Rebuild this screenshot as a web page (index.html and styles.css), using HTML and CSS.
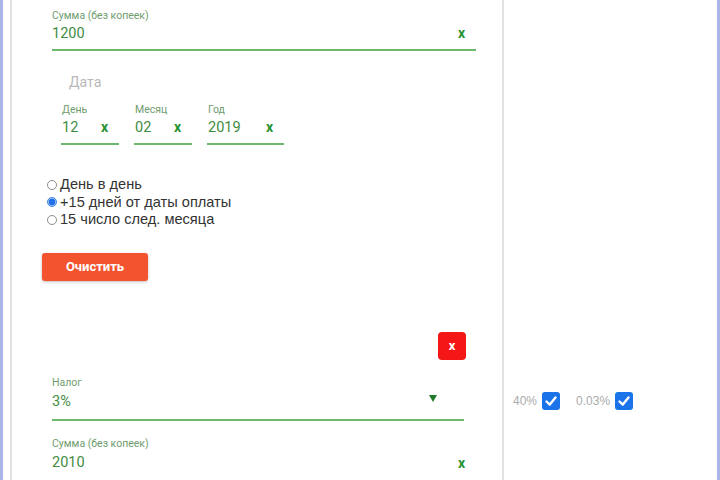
FILE: index.html
```html
<!DOCTYPE html>
<html lang="ru">
<head>
<meta charset="utf-8">
<link rel="stylesheet" href="styles.css">
</head>
<body>
<div class="frame">
  <div class="gutter"></div>
  <main class="main">
    <section class="calc">
      <div class="field field-wide">
        <div class="label">Сумма (без копеек)</div>
        <div class="value-row"><span class="value">1200</span><span class="clear">x</span></div>
      </div>

      <div class="date-title">Дата</div>
      <div class="date-row">
        <div class="field field-day">
          <div class="label">День</div>
          <div class="value-row"><span class="value">12</span><span class="clear">x</span></div>
        </div>
        <div class="field field-day">
          <div class="label">Месяц</div>
          <div class="value-row"><span class="value">02</span><span class="clear">x</span></div>
        </div>
        <div class="field field-year">
          <div class="label">Год</div>
          <div class="value-row"><span class="value">2019</span><span class="clear">x</span></div>
        </div>
      </div>

      <div class="radios">
        <label class="radio"><span class="dot"></span>День в день</label>
        <label class="radio"><span class="dot checked"></span>+15 дней от даты оплаты</label>
        <label class="radio"><span class="dot"></span>15 число след. месяца</label>
      </div>

      <button class="btn-clear">Очистить</button>
    </section>

    <section class="tax">
      <div class="remove-row"><button class="btn-remove">x</button></div>
      <div class="field field-select">
        <div class="label">Налог</div>
        <div class="value-row"><span class="value">3%</span><span class="caret"></span></div>
      </div>
      <div class="field field-wide field-second">
        <div class="label">Сумма (без копеек)</div>
        <div class="value-row"><span class="value">2010</span><span class="clear">x</span></div>
      </div>
    </section>
  </main>
  <aside class="side">
    <div class="opts">
      <span class="opt-text">40%</span>
      <span class="check"><svg viewBox="0 0 18 18" width="18" height="18"><path d="M4.5 9.5 L7.8 12.6 L13.5 5.5" fill="none" stroke="#fff" stroke-width="2.4" stroke-linecap="round" stroke-linejoin="round"/></svg></span>
      <span class="opt-text opt-gap">0.03%</span>
      <span class="check"><svg viewBox="0 0 18 18" width="18" height="18"><path d="M4.5 9.5 L7.8 12.6 L13.5 5.5" fill="none" stroke="#fff" stroke-width="2.4" stroke-linecap="round" stroke-linejoin="round"/></svg></span>
    </div>
  </aside>
</div>
</body>
</html>
```

FILE: styles.css
```css
* { box-sizing: border-box; }
html, body { margin: 0; padding: 0; background: #fff; }
body { font-family: Roboto, "Liberation Sans", Arial, sans-serif; }

.frame {
  display: flex;
  width: 720px;
  height: 480px;
  overflow: hidden;
  border-left: 3px solid #aab5ea;
  border-right: 3px solid #aab5ea;
}
.gutter { width: 7px; flex: none; }
.main {
  width: 494px;
  flex: none;
  border-left: 2px solid #e2e2e2;
  border-right: 2px solid #e2e2e2;
  padding: 10px 0 0 40px;
}
.side { flex: 1; padding: 392px 0 0 9px; }

.field {
  border-bottom: 2px solid #6cb86c;
  padding-bottom: 6px;
}
.field-wide { width: 424px; }
.label {
  font-size: 10.5px;
  line-height: 12px;
  color: #6f9c6f;
}
.value-row {
  display: flex;
  justify-content: space-between;
  align-items: center;
  margin-top: 1px;
  height: 20px;
  padding-right: 11px;
}
.value {
  font-size: 14.5px;
  color: #3f8c3f;
}
.clear {
  font-size: 14px;
  font-weight: bold;
  color: #2a9334;
  line-height: 1;
}

.date-title {
  margin: 22px 0 0 17px;
  font-size: 14px;
  line-height: 18px;
  color: #b9b9b9;
}
.date-row {
  display: flex;
  gap: 15px;
  margin: 13px 0 0 9px;
}
.field-day { width: 58px; padding-left: 1px; }
.field-year { width: 77px; padding-left: 1px; }
.field-day .value-row, .field-year .value-row { padding-right: 11px; }

.radios {
  display: flex;
  flex-direction: column;
  margin: 31px 0 0 -5px;
}
.radio {
  display: flex;
  align-items: center;
  font-family: "Liberation Sans", Arial, sans-serif;
  font-size: 14.6px;
  line-height: 17.5px;
  color: #333;
}
.dot {
  width: 10px;
  height: 10px;
  border-radius: 50%;
  border: 1px solid #8d8d8d;
  background: #fff;
  margin-right: 3px;
}
.dot.checked {
  border-color: #3b7fe0;
  background: radial-gradient(circle, #1e6fe8 0 3px, #9cc0f4 3.5px);
}

.btn-clear {
  display: block;
  margin: 24px 0 0 -10px;
  width: 106px;
  height: 28px;
  border: none;
  border-radius: 3px;
  background: #f4532f;
  color: #fff;
  font-family: inherit;
  font-size: 13px;
  font-weight: bold;
  box-shadow: 0 1px 3px rgba(0,0,0,0.25);
}

.tax { padding-top: 51px; }
.remove-row { display: flex; justify-content: flex-end; width: 414px; }
.btn-remove {
  width: 28px;
  height: 28px;
  border: none;
  border-radius: 4px;
  background: #f51616;
  color: #fff;
  font-family: inherit;
  font-size: 13px;
  font-weight: bold;
  padding: 0;
}
.field-select { width: 412px; margin-top: 17px; padding-bottom: 7px; }
.field-select .value-row, .field-second .value-row { margin-top: 3px; }
.field-second { margin-top: 17px; padding-bottom: 7px; }
.caret {
  width: 0;
  height: 0;
  border-left: 4.5px solid transparent;
  border-right: 4.5px solid transparent;
  border-top: 7px solid #1f7a2a;
  margin: -6px 16px 0 0;
}

.opts { display: flex; align-items: center; }
.opt-text {
  font-family: "Liberation Sans", Arial, sans-serif;
  font-size: 12px;
  color: #ababab;
  margin-right: 5px;
}
.opt-gap { margin-left: 16px; }
.check {
  width: 18px;
  height: 18px;
  border-radius: 3px;
  background: #1a73e8;
  display: flex;
}
```
